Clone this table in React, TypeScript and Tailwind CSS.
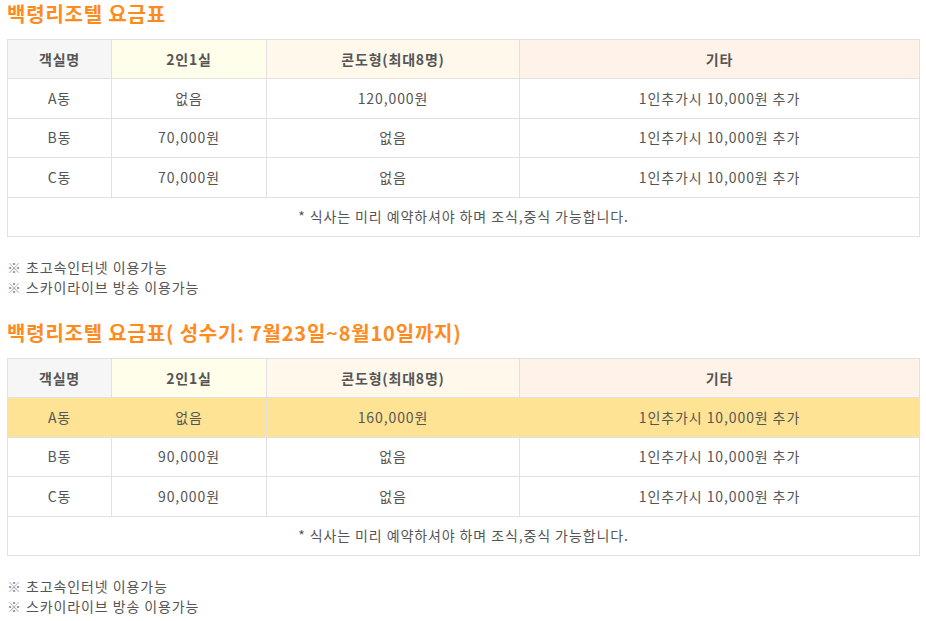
const rows1 = [
  { name: "A동", twin: "없음", condo: "120,000원", etc: "1인추가시 10,000원 추가", hi: false },
  { name: "B동", twin: "70,000원", condo: "없음", etc: "1인추가시 10,000원 추가", hi: false },
  { name: "C동", twin: "70,000원", condo: "없음", etc: "1인추가시 10,000원 추가", hi: false },
];

const rows2 = [
  { name: "A동", twin: "없음", condo: "160,000원", etc: "1인추가시 10,000원 추가", hi: true },
  { name: "B동", twin: "90,000원", condo: "없음", etc: "1인추가시 10,000원 추가", hi: false },
  { name: "C동", twin: "90,000원", condo: "없음", etc: "1인추가시 10,000원 추가", hi: false },
];

type Row = (typeof rows1)[number];

function PriceTable({ rows }: { rows: Row[] }) {
  const th = "h-[39px] border border-[#e1e1e1] text-center font-bold text-[14px] tracking-[0.8px] text-[#555]";
  const td = "h-[39.5px] border border-[#e1e1e1] text-center text-[14px] tracking-[0.9px] text-[#555]";
  return (
    <table className="w-[913px] border-collapse table-fixed">
      <colgroup>
        <col className="w-[104px]" />
        <col className="w-[155px]" />
        <col className="w-[253px]" />
        <col />
      </colgroup>
      <thead>
        <tr>
          <th className={`${th} bg-[#f6f6f6]`}>객실명</th>
          <th className={`${th} bg-[#fffeeb]`}>2인1실</th>
          <th className={`${th} bg-[#fff8eb]`}>콘도형(최대8명)</th>
          <th className={`${th} bg-[#fff2e8]`}>기타</th>
        </tr>
      </thead>
      <tbody>
        {rows.map((r) => (
          <tr key={r.name} className={r.hi ? "bg-[#ffe394]" : "bg-white"}>
            <td className={td}>{r.name}</td>
            <td className={td}>{r.twin}</td>
            <td className={td}>{r.condo}</td>
            <td className={td}>{r.etc}</td>
          </tr>
        ))}
        <tr>
          <td colSpan={4} className={td}>
            * 식사는 미리 예약하셔야 하며 조식,중식 가능합니다.
          </td>
        </tr>
      </tbody>
    </table>
  );
}

function Notes() {
  return (
    <ul className="mt-[20px] text-[14px] leading-[20px] tracking-[0.9px] text-[#555]">
      <li>
        <span className="text-[#8a8a8a]">※</span> 초고속인터넷 이용가능
      </li>
      <li>
        <span className="text-[#8a8a8a]">※</span> 스카이라이브 방송 이용가능
      </li>
    </ul>
  );
}

export default function App() {
  return (
    <div
      className="w-[926px] h-[621px] bg-white pl-[7px] overflow-hidden"
      style={{ fontFamily: '"Noto Sans CJK KR", "Noto Sans", sans-serif' }}
    >
      <h2 className="text-[20px] leading-[28px] font-bold text-[#ff8a1d] tracking-[0.8px]">백령리조텔 요금표</h2>
      <div className="mt-[11px]">
        <PriceTable rows={rows1} />
      </div>
      <Notes />

      <h2 className="mt-[22px] text-[20px] leading-[28px] font-bold text-[#ff8a1d] tracking-[0.8px]">
        백령리조텔 요금표( 성수기: 7월23일~8월10일까지)
      </h2>
      <div className="mt-[11px]">
        <PriceTable rows={rows2} />
      </div>
      <Notes />
    </div>
  );
}
